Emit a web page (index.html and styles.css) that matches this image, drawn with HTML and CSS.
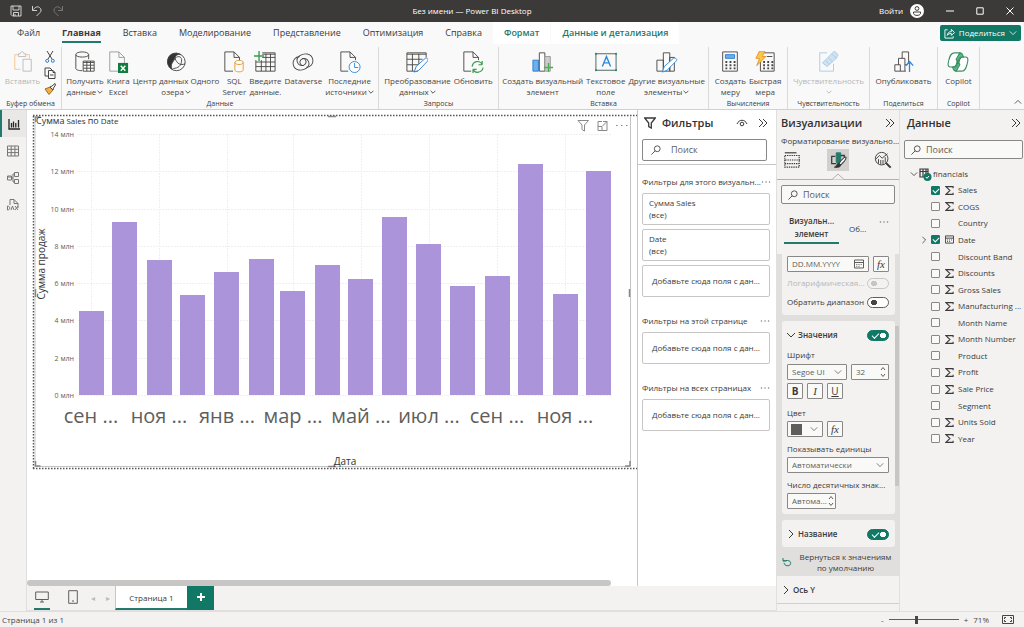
FILE: index.html
```html
<!DOCTYPE html>
<html lang="ru">
<head>
<meta charset="utf-8">
<title>Без имени — Power BI Desktop</title>
<link rel="stylesheet" href="styles.css">
</head>
<body>
<svg class="defs" aria-hidden="true">
  <symbol id="down" viewBox="0 0 10 10"><path d="M1 3l4 4 4-4"/></symbol>
  <symbol id="right" viewBox="0 0 10 10"><path d="M3 1l4 4-4 4"/></symbol>
  <symbol id="dbl" viewBox="0 0 10 10"><path d="M1 1l4 4-4 4M5 1l4 4-4 4"/></symbol>
  <symbol id="search" viewBox="0 0 12 12"><circle cx="7.500" cy="4.500" r="3.500"/><path d="M5 7l-4.500 4.500"/></symbol>
  <symbol id="dots" viewBox="0 0 12 4"><path d="M1 2h1.500M5.300 2h1.500M9.500 2H11"/></symbol>
  <symbol id="funnel" viewBox="0 0 12 12"><path d="M.7 1h10.600L7.300 6v5L4.700 9.500V6z"/></symbol>
  <symbol id="sigma" viewBox="0 0 8 8"><path d="M7.200 2V.6H.8L4.400 4 .8 7.400h6.400V6"/></symbol>
  <symbol id="spin" viewBox="0 0 6 12"><path d="M1 4l2-2.500L5 4M1 8l2 2.500L5 8"/></symbol>
  <symbol id="date" viewBox="0 0 10 9"><path d="M.5.5h9v8h-9zM.5 3h9M2.300 5h1M4.500 5h1M6.700 5h1M2.300 6.800h1M4.500 6.800h1"/></symbol>
</svg>

<header class="titlebar">
  <div class="quick">
    <button aria-label="Сохранить"><svg viewBox="0 0 12 12"><path d="M1 1h10v10H2.500L1 9.500zM3 1v4h6V1M3.500 11V7.500h5V11M5 9v2"/></svg></button>
    <button aria-label="Отменить"><svg viewBox="0 0 12 12"><path d="M1.500 1v4.500H6M1.500 5.500C4 2 6.500 1 8.500 2.500s2 3.500.5 5L5.500 11"/></svg></button>
    <button aria-label="Повторить" class="dim"><svg viewBox="0 0 12 12"><path d="M10.500 1v4.500H6M10.500 5.500C8 2 5.500 1 3.500 2.500s-2 3.500-.5 5L6.500 11"/></svg></button>
  </div>
  <h1>Без имени — Power BI Desktop</h1>
  <div class="window">
    <button class="login">Войти <svg viewBox="0 0 14 14"><circle cx="7" cy="7" r="7" fill="#fff" stroke="none"/><circle cx="7" cy="4.500" r="1.900" stroke="#3b3a39"/><path d="M3.500 8h7v1.500C10 12 4 12 3.500 9.500z" stroke="#3b3a39"/></svg></button>
    <button aria-label="Свернуть"><svg viewBox="0 0 8 8"><path d="M0 4h8"/></svg></button>
    <button aria-label="Развернуть"><svg viewBox="0 0 8 8"><path d="M.8.8h6.400v6.400H.8z"/></svg></button>
    <button aria-label="Закрыть"><svg viewBox="0 0 8 8"><path d="M.5.5l7 7M7.500.5l-7 7"/></svg></button>
  </div>
</header>

<nav class="tabs">
  <button>Файл</button><button class="on">Главная</button><button>Вставка</button><button>Моделирование</button><button>Представление</button><button>Оптимизация</button><button>Справка</button><button class="ctx">Формат</button><button class="ctx">Данные и детализация</button>
  <button class="share"><svg viewBox="0 0 12 12"><path d="M4 2H1v9h9V9M3.500 8C4 5 5.500 4 8 4V1.500L11.500 5 8 8V6C6 6 4.500 6.500 3.500 8z"/></svg>Поделиться<svg class="i8"><use href="#down"/></svg></button>
</nav>

<section class="ribbon">
  <div class="group">
    <div class="items paste">
      <button class="cmd off"><svg viewBox="0 0 24 24"><path stroke="#f5c491" d="M9 20H3V4h4M15 4h4v4"/><path stroke="#bbb" d="M7 6V3h2c0-3 4-3 4 0h2v3zM12 9h9v13h-9z"/></svg><span>Вставить</span></button>
      <div class="clip">
        <button aria-label="Вырезать"><svg viewBox="0 0 12 12"><path d="M3 0l5 8M9 0L4 8"/><g stroke="#2b7cd3"><circle cx="3.200" cy="9.800" r="1.500"/><circle cx="8.800" cy="9.800" r="1.500"/></g></svg></button>
        <button aria-label="Копировать"><svg viewBox="0 0 12 12"><path d="M4 9H1V1h5l2 2M4.500 3.500H9l2 2v6H4.500zM9 3.500v2h2M6 8h3.500"/></svg></button>
        <button aria-label="Формат по образцу"><svg viewBox="0 0 12 12"><path fill="#eeb04c" stroke="#a06a1a" d="M1 6l5-2 3 3-4 4.500z"/><path d="M6 4l2-1 3-2.500L11.500 2 9.500 5 9 7z"/></svg></button>
      </div>
    </div>
    <h2>Буфер обмена</h2>
  </div>
  <div class="group">
    <div class="items">
      <button class="cmd"><svg viewBox="0 0 24 24"><path d="M16 9V4c0-4-14-4-14 0v15c0 1.500 3 2.500 7 2.500M2 4c0 3.500 14 3.500 14 0"/><path fill="#fff" d="M10 11h12v11H10z"/><path d="M10 12.500h12M10 15.500h12M10 18.800h12M14 11v11M18 11v11"/></svg><span>Получить<br>данные<svg class="v"><use href="#down"/></svg></span></button>
      <button class="cmd"><svg viewBox="0 0 24 24"><path stroke="#999" d="M12 22H3V1h10l6 6v7M13 1v6h6"/><path fill="#107c41" stroke="none" d="M12 13h11v11H12z"/><path stroke="#fff" stroke-width="1.500" d="M15 16l5 5.500M20 16l-5 5.500"/></svg><span>Книга<br>Excel</span></button>
      <button class="cmd"><svg viewBox="0 0 24 24"><circle cx="12.500" cy="12" r="9.500"/><path fill="#333" d="M8 3C1 6 1 17 8 20c-3-5 1-8 3-12 0-3 3-5 6-4-3-2-6-2-9-1z"/><path d="M11 8c2 6 6 8 11 6M9 19c5 0 9-3 9-8 1-4-3-7-7-3"/></svg><span>Центр данных Одного<br>озера<svg class="v"><use href="#down"/></svg></span></button>
      <button class="cmd"><svg viewBox="0 0 24 24"><path d="M11 22H2V1h10l6 6v3M12 1v6h6"/><path fill="#fff" stroke="#e8912d" d="M13 12.500v8c0 3 9 3 9 0v-8c0-3-9-3-9 0c0 3 9 3 9 0"/></svg><span>SQL<br>Server</span></button>
      <button class="cmd"><svg viewBox="0 0 24 24"><path d="M9 2h14v20H2V10M9 3.500h14M2 12h21M9 7h14M2 17h21M8 10v12M13 3v19M18 3v19"/><path stroke="#3a9b4b" stroke-width="1.500" d="M5.500 0v11M0 5.500h11"/></svg><span>Введите<br>данные.</span></button>
      <button class="cmd"><svg viewBox="0 0 24 24"><g transform="rotate(-15 12 12)"><path d="M12 15.500c-4 1-5-6 0-7 7-1 8 9 2 11C8 21.500 1 19 1 12.500 1 7 6 4 10 5.500"/><path d="M12 8.500c4-1 5 6 0 7-7 1-8-9-2-11C16 2.500 23 5 23 11.500c0 5.500-5 8.500-9 7"/></g></svg><span>Dataverse</span></button>
      <button class="cmd"><svg viewBox="0 0 24 24"><path d="M10 22H2V1h10l6 6v3M12 1v6h6"/><g stroke="#2b88d8" fill="#fff"><circle cx="17" cy="17.500" r="6"/><path d="M17 13v5h4"/></g></svg><span>Последние<br>источники<svg class="v"><use href="#down"/></svg></span></button>
    </div>
    <h2>Данные</h2>
  </div>
  <div class="group">
    <div class="items">
      <button class="cmd"><svg viewBox="0 0 24 24"><path d="M13 22H1V2h21v5M1 3.500h21M1 9h17M1 15h13M7 3v19M14 3v12"/><path fill="#fff" stroke="#2b7cd3" d="M9 23l2-6L21 8c2-1 4 1 2.500 3L14 21z"/></svg><span>Преобразование<br>данных<svg class="v"><use href="#down"/></svg></span></button>
      <button class="cmd"><svg viewBox="0 0 24 24"><path d="M10 22H2V1h10l6 6v3M12 1v6h6"/><path stroke="#3a9b4b" stroke-width="1.300" d="M11 17c1-7 9-7 11-2v-4M22 15h-4M23 18c-1 6-9 7-11 2v4M12 20h4"/></svg><span>Обновить</span></button>
    </div>
    <h2>Запросы</h2>
  </div>
  <div class="group">
    <div class="items">
      <button class="cmd"><svg viewBox="0 0 24 24"><path fill="#6bb1ee" stroke="#2b7cd3" d="M1 10h6v12H1z"/><path fill="#fff" d="M8 2h6v20H8z"/><path fill="#ccc" stroke="#999" d="M14 6h6v16h-6z"/><path stroke="#4caf50" stroke-width="1.500" d="M18 13v10M13 18h10"/></svg><span>Создать визуальный<br>элемент</span></button>
      <button class="cmd"><svg viewBox="0 0 24 24"><path stroke="#40605c" d="M1 3h22v18H1z"/><path stroke="#2b88d8" stroke-width="1.500" d="M8 17l4.500-11L17 17M9.500 13h6"/><path fill="#217a6b" stroke="#217a6b" d="M.5 2.500h1v1h-1zM22.500 2.500h1v1h-1zM.5 20.500h1v1h-1zM22.500 20.500h1v1h-1z"/></svg><span>Текстовое<br>поле</span></button>
      <button class="cmd"><svg viewBox="0 0 24 24"><path d="M1 10h7v12H1zM8 2h7v20H8zM15 7h5v15h-5z"/><path fill="#fff" stroke="#2b88d8" d="M7 23l2-6L19 8c2-1 5 1 3 3L12 21z"/></svg><span>Другие визуальные<br>элементы<svg class="v"><use href="#down"/></svg></span></button>
    </div>
    <h2>Вставка</h2>
  </div>
  <div class="group">
    <div class="items">
      <button class="cmd"><svg viewBox="0 0 24 24"><path d="M4 1h16v21H4z"/><path fill="#6bb1ee" stroke="#2b7cd3" d="M7 4h10v4H7z"/><path stroke-width="2" stroke-dasharray="2 2.500" d="M7 12h11M7 15.500h11M7 19h11"/></svg><span>Создать<br>меру</span></button>
      <button class="cmd"><svg viewBox="0 0 24 24"><path d="M11 2h11v20H7V11M14 6h6"/><path stroke-width="2" stroke-dasharray="2 2.500" d="M10 12h11M10 15.500h11M10 19h11"/><path fill="#f7c948" stroke="#e8912d" d="M6 0h6L9 6h4L3 16l3-8H2z"/></svg><span>Быстрая<br>мера</span></button>
    </div>
    <h2>Вычисления</h2>
  </div>
  <div class="group">
    <div class="items">
      <button class="cmd off"><svg viewBox="0 0 24 24"><path stroke="#a8cbe8" d="M11 2H3v20h15V14"/><path fill="#cfe2f2" stroke="#a8cbe8" d="M6 13L16 3l5 5-10 9zM16 3l3-3 4 4-2 4M9 10l5 5M12 7l5 5"/></svg><span>Чувствительность<br><svg class="v"><use href="#down"/></svg></span></button>
    </div>
    <h2>Чувствительность</h2>
  </div>
  <div class="group">
    <div class="items">
      <button class="cmd"><svg viewBox="0 0 24 24"><path d="M14 22H2v-7h6v7M6 15V8h7v14M10 8V1h7v13M13 15h3"/><path stroke="#2b88d8" stroke-width="1.400" d="M18 23V12M14 16l4-4.500 4 4.500"/></svg><span>Опубликовать</span></button>
    </div>
    <h2>Поделиться</h2>
  </div>
  <div class="group">
    <div class="items">
      <button class="cmd"><svg viewBox="0 0 24 24"><g stroke="#3d8f63" stroke-width="1.200"><path fill="#fff" d="M6 17.500H3.500c-3 0-2.500-4-1.500-7.500C3 6 4 2 8 2h6l-4 13c-.5 1.500-1.500 2.500-4 2.500z"/><path fill="#fff" d="M18 6.500h2.500c3 0 2.500 4 1.500 7.500-1 4-2 8-6 8h-6l4-13c.5-1.500 1.500-2.500 4-2.500z"/><path fill="#5cb88a" d="M14 2c3 0 3 2.500 4 4.500h-2c-2 0-2.500 1-3 3L12 13 10 9zM10 22c-3 0-3-2.500-4-4.500h2c2 0 2.500-1 3-3l1-3.500 2 4z"/></g></svg><span>Copilot</span></button>
    </div>
    <h2>Copilot</h2>
  </div>
  <div class="group last"><button aria-label="Свернуть ленту"><svg class="i8 up"><use href="#down"/></svg></button></div>
</section>

<main>
  <nav class="rail">
    <button class="on" aria-label="Отчет"><svg viewBox="0 0 12 12"><path stroke-width="1.300" d="M1 1v10h11M3.500 9.500V5M5.500 9.500V3.500M7.800 9.500V5M10.500 9.500V2"/></svg></button>
    <button aria-label="Таблица"><svg viewBox="0 0 12 12"><path d="M.5 1h11v10H.5zM.5 4.300h11M.5 7.600h11M4.200 1v10M7.900 1v10"/></svg></button>
    <button aria-label="Модель"><svg viewBox="0 0 12 12"><path d="M.5 4h4v4h-4zM.5 5h4M7.500.5h4v4h-4zM7.500 7.500h4v4h-4zM7.500 2H6v8h1.500M4.500 6H6"/></svg></button>
    <button aria-label="DAX"><svg viewBox="0 0 12 12"><path d="M3 6V.5h4l4 4V9M7 .5v4h4M.5 7v4c3 0 3-4 0-4M4 11l1.500-4L7 11M8 7l3 4M11 7l-3 4"/></svg></button>
  </nav>

  <section class="center">
    <div class="work">
      <div class="canvas">
        <svg class="chart" viewBox="27 110 610 364" role="img" aria-label="Сумма Sales по Date">
          <g class="grid" id="grid"></g>
          <g class="bars" id="bars"></g>
          <path class="dotted" d="M33 115.500h604M33.500 116v353M33 468.500h604"/>
          <path class="frame" d="M35 117v350M35 466.500h595M630.500 117v349"/>
          <path class="grips" d="M328 116.500h8M328 466.500h8M629.500 289v8M35.500 289v8M35.500 461v5h5M630 461v5h-5M35.500 122v-5h5"/>
          <text class="title" x="36" y="124"><tspan class="big">Сумма</tspan> Sales <tspan class="big">по</tspan> Date</text>
          <text class="axis" x="345" y="465" text-anchor="middle">Дата</text>
          <text class="axis" transform="translate(45 264) rotate(-90)" text-anchor="middle">Сумма продаж</text>
          <g class="tools"><path d="M578 120.500h10.500L584.500 125v6l-2.500-1.500V125z"/><path d="M602 121.500h-4v9h9v-5M598 126.500h4v4M603 121.500h4v4M607 121.500l-4.500 4.500"/><path d="M616 125.500h1.500M621 125.500h1.500M626 125.500h1.500"/></g>
        </svg>
      </div>

      <aside class="filters">
        <div class="pane-head"><svg class="funnel"><use href="#funnel"/></svg><h2>Фильтры</h2><svg class="eye" viewBox="0 0 12 8"><path d="M1 5c2-5 8-5 10 0"/><circle cx="6" cy="5" r="1.800"/></svg><button aria-label="Свернуть фильтры"><svg class="i10"><use href="#dbl"/></svg></button></div>
        <label class="search"><svg><use href="#search"/></svg><input type="text" placeholder="Поиск" aria-label="Поиск фильтров"></label>
        <div class="filter-body">
          <h3><span>Фильтры для этого визуальн...</span><svg class="more"><use href="#dots"/></svg></h3>
          <div class="fcard">Сумма Sales<br>(все)</div>
          <div class="fcard">Date<br>(все)</div>
          <div class="fcard drop">Добавьте сюда поля с дан...</div>
          <h3><span>Фильтры на этой странице</span><svg class="more"><use href="#dots"/></svg></h3>
          <div class="fcard drop">Добавьте сюда поля с дан...</div>
          <h3><span>Фильтры на всех страницах</span><svg class="more"><use href="#dots"/></svg></h3>
          <div class="fcard drop">Добавьте сюда поля с дан...</div>
        </div>
      </aside>
      <div class="hscroll"></div>
    </div>

    <div class="pages">
      <button class="view on" aria-label="Компьютер"><svg viewBox="0 0 14 12"><path d="M.7 1h12.600v7.500H.7zM5 11h4M7 8.500V11"/></svg></button>
      <button class="view" aria-label="Телефон"><svg viewBox="0 0 14 14"><path d="M2.700.7h8.600v12.600H2.700zM6 11h2"/></svg></button>
      <button class="nav" aria-label="Назад">◂</button><button class="nav" aria-label="Вперед">▸</button>
      <button class="page">Страница 1</button>
      <button class="add" aria-label="Новая страница"><svg viewBox="0 0 8 8"><path d="M4 0v8M0 4h8"/></svg></button>
    </div>
  </section>

  <aside class="viz">
    <div class="pane-head"><h2>Визуализации</h2><button aria-label="Свернуть визуализации"><svg class="i10"><use href="#dbl"/></svg></button></div>
    <p class="sub">Форматирование визуально...</p>
    <div class="modes">
      <button aria-label="Построить"><svg viewBox="0 0 20 20"><path d="M2 2h13" stroke-width="1.300"/><g stroke-dasharray="1.500 1" stroke-width="1.300"><path d="M2 5h16v5H2zM2 10v8h16v-8M2 14h16"/></g></svg></button>
      <button class="on" aria-label="Формат"><svg viewBox="0 0 20 20"><path fill="#217a6b" stroke="#217a6b" d="M8 2h5v9l-3 4-2-3z"/><path stroke-width="1.400" d="M7 6H3v8h5M13 5h4v2"/><path fill="#fff" stroke-width="1.200" d="M19 7c-1-1-4 1-8 7l2 1.500C17 12 19 9 19 7z"/><path fill="#333" d="M11 14l2 1.500c0 3-5 3-7 2.500 3-1 2-4 5-4z"/></svg></button>
      <button aria-label="Аналитика"><svg viewBox="0 0 20 20"><circle cx="8.500" cy="8.500" r="7"/><path d="M2 9l4-4 3 3 6-5M5 14V9M7.500 15V10M10 15V10M12.500 13V7"/><path stroke-width="2.200" d="M13.500 13.500l5 5"/></svg></button>
    </div>
    <div class="notch"><svg viewBox="0 0 12 7"><path fill="#f3f2f1" d="M0 6.500L6 1l6 5.500"/></svg></div>
    <label class="search"><svg><use href="#search"/></svg><input type="text" placeholder="Поиск" aria-label="Поиск параметров"></label>
    <div class="subtabs"><button class="on">Визуальн...<br>элемент</button><button>Об...</button><svg class="more"><use href="#dots"/></svg></div>
    <div class="scroll">
      <section class="card first">
        <div class="row"><label class="field wide"><input type="text" placeholder="DD.MM.YYYY" aria-label="Дата"><svg class="i10"><use href="#date"/></svg></label><button class="sq fx">fx</button></div>
        <label class="row tight off"><span>Логарифмическая...</span><input type="checkbox" class="toggle" disabled></label>
        <label class="row tight"><span>Обратить диапазон</span><input type="checkbox" class="toggle"></label>
      </section>
      <section class="card values">
        <label class="row head"><svg class="i10"><use href="#down"/></svg><b>Значения</b><input type="checkbox" class="toggle" checked></label>
        <label class="cap font-cap" for="font">Шрифт</label>
        <div class="row"><div class="field font"><select id="font"><option>Segoe UI</option></select><svg class="i8"><use href="#down"/></svg></div><div class="field size"><input type="text" value="32" aria-label="Размер"><svg class="spin"><use href="#spin"/></svg></div></div>
        <div class="row styles"><button class="sq"><b>B</b></button><button class="sq"><i>I</i></button><button class="sq"><u>U</u></button></div>
        <p class="cap color-cap">Цвет</p>
        <div class="row"><button class="field color" aria-label="Цвет"><span></span><svg class="i8"><use href="#down"/></svg></button><button class="sq fx">fx</button></div>
        <label class="cap unit" for="units">Показывать единицы</label>
        <div class="row"><div class="field wide"><select id="units"><option>Автоматически</option></select><svg class="i8"><use href="#down"/></svg></div></div>
        <label class="cap unit" for="dec">Число десятичных знак...</label>
        <div class="row"><div class="field dec"><input id="dec" type="text" value="Автома..."><svg class="spin"><use href="#spin"/></svg></div></div>
      </section>
      <section class="card name"><label class="row head"><svg class="i10"><use href="#right"/></svg><b>Название</b><input type="checkbox" class="toggle" checked></label></section>
      <button class="reset"><svg viewBox="0 0 10 10"><path d="M1 1v3h3.500M1 4c8-2 8 2 7.500 3-1 3-6 2-6.500-1"/></svg><span>Вернуться к значениям<br>по умолчанию</span></button>
      <button class="axis-row"><svg class="i10"><use href="#right"/></svg>Ось Y</button>
      <div class="thumb"></div>
    </div>
  </aside>

  <aside class="data">
    <div class="pane-head"><h2>Данные</h2><button aria-label="Свернуть данные"><svg class="i10"><use href="#dbl"/></svg></button></div>
    <label class="search"><svg><use href="#search"/></svg><input type="text" placeholder="Поиск" aria-label="Поиск полей"></label>
    <div class="table-name"><svg class="i8"><use href="#down"/></svg><svg class="tbl" viewBox="0 0 13 13"><path stroke-width="1.200" d="M1 1h8v8H1zM1 3.500h8M4 1v8M7 1v8"/><circle cx="8.500" cy="9" r="4" fill="#117865" stroke="none"/><path stroke="#fff" d="M6.800 9l1.200 1.300 2-2.300"/></svg>financials</div>
    <div class="fields" id="fields"></div>
  </aside>
</main>

<footer class="status">
  <span>Страница 1 из 1</span>
  <div class="zoom"><button>-</button><input type="range" min="10" max="200" value="84" aria-label="Масштаб"><button>+</button><span>71%</span><svg viewBox="0 0 12 9"><path d="M.5 3V.5h11V3M.5 6v2.500h11V6M.5 3v3M11.500 3v3M2.500 4V2.500H4M8 2.500h1.500V4M2.500 5v1.500H4M8 6.500h1.500V5"/></svg></div>
</footer>
<script src="script.js"></script>
</body>
</html>
```
FILE: script.js
```js
const BASE = 395;
const bars = [[79, 311], [112, 222], [147, 260], [180, 295], [214, 272], [249, 259], [280, 291], [315, 265],
  [348, 279], [382, 217], [416, 244], [450, 286], [485, 276], [518, 164], [553, 294], [586, 171]];
document.getElementById('bars').innerHTML =
  bars.map(([x, y]) => `<rect x="${x}" y="${y}" width="25" height="${BASE - y}"/>`).join('');

const months = [['сен', 91], ['ноя', 159], ['янв', 227], ['мар', 293], ['май', 361], ['июл', 429], ['сен', 497], ['ноя', 565]];
let grid = '';
for (let i = 0; i <= 7; i++) {
  const y = Math.round(BASE - i * 37.3);
  grid += `<path d="M78 ${y}.5H612"/><text class="tick" x="74" y="${y + 3}" text-anchor="end">${i * 2} млн</text>`;
}
for (const [m, x] of months) {
  grid += `<path d="M${x}.5 134V395"/><text class="month" x="${x}" y="423" text-anchor="middle">${m} ...</text>`;
}
document.getElementById('grid').innerHTML = grid;

const fields = [['Sales', 's', 1], ['COGS', 's'], ['Country'], ['Date', 'd', 1], ['Discount Band'], ['Discounts', 's'],
  ['Gross Sales', 's'], ['Manufacturing ...', 's'], ['Month Name'], ['Month Number', 's'], ['Product'], ['Profit', 's'],
  ['Sale Price', 's'], ['Segment'], ['Units Sold', 's'], ['Year', 's']];
document.getElementById('fields').innerHTML = fields.map(([name, kind, on]) => `<label>
  <svg class="i8">${kind === 'd' ? '<use href="#right"/>' : ''}</svg>
  <input type="checkbox" ${on ? 'checked' : ''}>
  <svg class="kind">${kind ? `<use href="#${kind === 'd' ? 'date' : 'sigma'}"/>` : ''}</svg>
  <span>${name}</span></label>`).join('');
```
FILE: styles.css
```css
* { box-sizing: border-box; }
body { margin: 0; height: 100vh; display: flex; flex-direction: column; overflow: hidden; background: #f3f2f1; color: #3b3a39; font: 8px/12px "Open Sans", "Noto Sans", sans-serif; }
button, input, select { font: inherit; color: inherit; background: none; border: 0; padding: 0; margin: 0; }
h1, h2, h3, p { margin: 0; font-weight: 400; }
svg { fill: none; stroke: currentColor; flex: none; }
.defs { position: absolute; width: 0; height: 0; }
.i8 { width: 8px; height: 8px; }
.i10 { width: 10px; height: 10px; }

.titlebar { flex: none; height: 22px; background: #3b3a39; color: #fff; display: grid; grid-template-columns: 1fr auto 1fr; align-items: center; }
.titlebar h1 { font-size: 8px; margin-right: 80px; }
.titlebar button { display: flex; align-items: center; }
.quick { display: flex; gap: 9px; padding-left: 10px; color: #d2d0ce; }
.quick svg { width: 12px; height: 12px; }
.dim { opacity: .4; }
.window { display: flex; justify-content: flex-end; gap: 22px; padding-right: 10px; }
.window svg { width: 8px; height: 8px; }
.window .login { gap: 7px; }
.window .login svg { width: 14px; height: 14px; }

.tabs { flex: none; height: 22px; background: #f9f9f9; display: flex; padding-left: 6px; font-size: 9px; }
.tabs button { padding: 0 11px; position: relative; }
.tabs .on { font-weight: 700; }
.tabs .on::after { content: ""; position: absolute; left: 11px; right: 11px; bottom: 1px; height: 2px; background: #217a6b; }
.tabs .ctx { background: #fff; color: #217a6b; font-weight: 600; margin-right: 1px; }
.tabs .share { margin: 3px 3px 3px auto; padding: 0 4px; font-size: 8px; background: #117865; color: #fff; border-radius: 2px; display: flex; align-items: center; gap: 4px; font-weight: 500; }
.share svg:first-child { width: 11px; height: 11px; }

.ribbon { flex: none; background: #f9f9f9; border-bottom: 1px solid #d2d0ce; display: grid; grid-template-columns: 62fr 317fr 120fr 210fr 79fr 82fr 68fr 42fr 44fr; height: 66px; }
.group { min-width: 0; display: flex; flex-direction: column; justify-content: space-between; margin-top: 3px; padding-top: 4px; border-right: 1px solid #dcdad8; }
.group h2 { font-size: 7px; line-height: 10px; text-align: center; white-space: nowrap; }
.items { display: flex; justify-content: center; gap: 3px; white-space: nowrap; color: #484644; }
.cmd { display: flex; flex-direction: column; align-items: center; line-height: 11px; gap: 2px; }
.cmd > svg { width: 22px; height: 22px; }
.cmd .v { width: 6px; height: 6px; margin-left: 1px; stroke-width: 1.500; }
.off { color: #b8b6b4; }
.paste { gap: 4px; }
.clip { display: flex; flex-direction: column; gap: 4px; }
.clip button, .clip svg { display: block; width: 12px; height: 12px; }
.last { border: 0; justify-content: flex-end; align-items: flex-end; padding: 0 2px 3px; }
.last button { display: flex; }
.up { transform: rotate(180deg); }

main { flex: 1; min-height: 0; display: flex; }
.rail { width: 27px; flex: none; border-right: 1px solid #e1dfdd; display: flex; flex-direction: column; }
.rail button { height: 27px; display: grid; place-items: center; color: #797775; }
.rail .on { border-left: 2px solid #217a6b; background: #eae8e6; color: #252423; }
.rail svg { width: 12px; height: 12px; }
.center { flex: 1; min-width: 0; display: flex; flex-direction: column; }
.work { flex: 1; min-height: 0; display: flex; position: relative; background: #fff; }
.canvas { flex: 1; min-width: 0; }
.hscroll { position: absolute; left: 0; width: 78%; bottom: 0; height: 6px; border-radius: 3px; background: #c8c6c4; }
.chart { display: block; width: 100%; }
.grid path { stroke: #f0f0f0; stroke-dasharray: 2 1; }
.bars { fill: #ac94db; stroke: none; }
.dotted { stroke: #555; stroke-width: 1.500; stroke-dasharray: 1.500 1.500; }
.frame { stroke: #c4c4c4; }
.grips { stroke: #888; stroke-width: 1.500; }
.chart text { stroke: none; fill: #605e5c; }
.chart .title { font-size: 8px; fill: #323130; }
.chart .title .big { font-size: 9px; }
.chart .axis { font-size: 10px; fill: #323130; }
.chart .tick { font-size: 7px; }
.chart .month { font-size: 20px; }
.tools { stroke: #888; }

.pane-head { display: flex; align-items: center; height: 25px; padding: 0 6px; }
.pane-head h2 { flex: 1; font-size: 11px; font-weight: 600; color: #323130; }
.pane-head button { display: flex; }
.search { display: flex; align-items: center; height: 19px; border: 1px solid #8a8886; border-radius: 2px; padding: 0 6px; gap: 5px; font-size: 9px; background: #f9f9f8; }
.search svg { width: 10px; height: 10px; }
.search input { min-width: 0; flex: 1; outline: 0; }
::placeholder { color: #605e5c; opacity: 1; }

.filters { width: 139px; flex: none; border-left: 1px solid #c8c6c4; }
.funnel { width: 12px; height: 12px; margin-right: 6px; stroke-width: 1.300; }
.eye { width: 12px; height: 8px; margin-right: 10px; }
.filters .pane-head { padding-right: 8px; }
.filters .search { height: 22px; margin: 4px 9px 3px 4px; background: #fff; gap: 10px; padding-left: 8px; }
.filter-body { border-top: 1px solid #c8c6c4; padding: 10px 6px 0 4px; }
.filters h3 { display: flex; align-items: center; justify-content: space-between; font-size: 8px; line-height: 14px; margin-bottom: 4px; white-space: nowrap; }
.filters .fcard + h3 { margin-top: 17px; }
.more { width: 10px; height: 4px; }
.fcard { height: 32px; border: 1px solid #c8c6c4; border-radius: 2px; padding: 3px 6px; margin-bottom: 4px; white-space: nowrap; }
.fcard.drop { padding: 9px 8px; text-align: center; }

.pages { flex: none; height: 25px; display: flex; background: #f3f2f1; border-bottom: 1px solid #e1dfdd; }
.view { width: 16px; margin-left: 7px; display: flex; justify-content: center; align-items: center; border-bottom: 2px solid transparent; color: #605e5c; }
.view.on { border-color: #217a6b; }
.view svg { width: 14px; height: 14px; }
.view + .view { margin: 0 4px 0 15px; }
.nav { width: 15px; color: #bbb; }
.page { width: 72px; background: #fff; border-bottom: 2px solid #217a6b; border-left: 1px solid #c8c6c4; font-weight: 500; padding-top: 2px; }
.add { width: 27px; background: #117865; color: #fff; }
.add svg { width: 8px; height: 8px; stroke-width: 2; }

.viz { width: 124px; flex: none; border-left: 1px solid #e1dfdd; border-right: 1px solid #e1dfdd; display: flex; flex-direction: column; }
.viz > * { flex: none; }
.viz .pane-head { padding: 0 4px; }
.sub { padding-left: 4px; font-weight: 500; white-space: nowrap; }
.modes { display: flex; justify-content: space-between; padding: 2px 5px 0 4px; }
.modes button { width: 22px; height: 22px; display: grid; place-items: center; }
.modes .on { background: #d2d0ce; }
.modes svg { width: 18px; height: 18px; }
.notch { height: 9px; border-bottom: 1px solid #b3b0ad; display: flex; justify-content: center; align-items: flex-end; margin-bottom: 5px; }
.notch svg { width: 12px; height: 7px; margin-bottom: -1px; stroke: #b3b0ad; }
.viz .search { margin: 0 4px; }
.subtabs { display: flex; align-items: center; gap: 10px; padding: 0 10px 0 7px; height: 50px; font-size: 8px; }
.subtabs .on { font-weight: 600; line-height: 13px; border-bottom: 2px solid #217a6b; width: 55px; padding-bottom: 2px; }
.subtabs .more { margin: 0 0 14px auto; }
.viz > .scroll { flex: 1; min-height: 0; overflow: hidden; position: relative; background: #e1dfdd; display: flex; flex-direction: column; }
.card { flex: none; margin: 0 4px 6px 5px; padding: 6px 6px 5px 5px; background: #f3f2f1; border-radius: 3px; display: flex; flex-direction: column; }
.card.first { padding: 2px 6px 5px 5px; border-radius: 0 0 3px 3px; gap: 3px; }
.row { display: flex; align-items: center; gap: 4px; min-height: 16px; white-space: nowrap; }
.row.tight { gap: 1px; }
.row span:first-child { flex: 1; min-width: 0; }
.row.head b { flex: 1; font-weight: 600; }
.row.head { gap: 2px; }
.row.head svg { margin-left: -1px; }
.field { height: 16px; display: flex; align-items: center; border: 1px solid #8a8886; border-radius: 1px; padding: 0 4px; background: #f9f9f8; color: #605e5c; }
.field input, .field select { min-width: 0; width: 100%; flex: 1; appearance: none; outline: 0; }
.wide { flex: 1; min-width: 0; }
.font { flex: 5; min-width: 0; }
.size { flex: 3; min-width: 0; padding: 0 2px 0 4px; }
.spin { width: 6px; height: 12px; }
.sq { width: 16px; height: 16px; border: 1px solid #8a8886; border-radius: 1px; font-size: 10px; line-height: 12px; background: #f9f9f8; }
.sq i { font-family: "Liberation Serif", serif; font-size: 11px; }
.fx { font: italic 11px/12px "Liberation Serif", serif; }
.styles { margin-top: 3px; }
.cap { line-height: 12px; margin-bottom: 3px; white-space: nowrap; }
.font-cap { margin-top: 6px; }
.color-cap { margin-top: 8px; margin-bottom: 2px; }
.unit { margin-top: 6px; margin-bottom: 2px; }
.color { width: 36px; justify-content: space-between; padding: 0 4px 0 3px; }
.color span { width: 11px; height: 11px; background: #605e5c; }
.row .color span:first-child { flex: none; }
.dec { width: 49px; padding: 0 1px 0 4px; }
.toggle { appearance: none; width: 22px; height: 11px; border: 1px solid #605e5c; border-radius: 6px; flex: none; background: radial-gradient(circle at 6px 50%, #484644 0 3px, transparent 3px) #fff; }
.toggle:disabled { border-color: #c8c6c4; background: radial-gradient(circle at 6px 50%, #c8c6c4 0 3px, transparent 3px); }
.toggle:checked { position: relative; border-color: #117865; background: radial-gradient(circle at 15px 50%, #fff 0 3px, transparent 3px) #117865; }
.toggle:checked::after { content: ""; position: absolute; left: 4px; top: 2px; width: 6px; height: 3px; border: solid #fff; border-width: 0 0 1px 1px; transform: rotate(-45deg); }
.reset { flex: none; display: flex; align-items: center; line-height: 11px; padding: 0 6px 2px 5px; gap: 6px; margin-top: -2px; }
.reset svg { width: 10px; height: 10px; color: #217a6b; }
.reset span { flex: 1; white-space: nowrap; }
.axis-row { flex: none; height: 28px; background: #f3f2f1; border-bottom: 1px solid #d2d0ce; display: flex; align-items: center; gap: 2px; padding-left: 4px; font-weight: 600; margin-top: 1px; }
.scroll::after { content: ""; flex: 1; background: #f3f2f1; }
.thumb { position: absolute; right: 0; top: 72px; width: 4px; height: 160px; background: #c8c6c4; }

.data { width: 124px; flex: none; }
.data .pane-head { padding: 0 3px 0 7px; }
.data .search { margin: 5px 1px 0 4px; }
.table-name { display: flex; align-items: center; height: 16px; margin: 7px 0 0 10px; gap: 1px; }
.tbl { width: 13px; height: 13px; }
.fields { height: 265px; display: grid; grid-auto-rows: 1fr; padding-left: 20px; }
.fields label { display: flex; align-items: center; white-space: nowrap; gap: 4px; }
.fields input { appearance: none; width: 9px; height: 9px; border: 1px solid #8a8886; border-radius: 1px; margin: 0 1px 0 -1px; background: #f9f9f8; display: grid; place-items: center; flex: none; }
.fields input:checked { background: #117865; border-color: #117865; }
.fields input:checked::after { content: ""; width: 5px; height: 3px; border: solid #fff; border-width: 0 0 1px 1px; transform: rotate(-45deg); margin-bottom: 1px; }
.kind { width: 9px; height: 9px; }

.status { flex: none; height: 16px; border-top: 1px solid #e1dfdd; display: flex; align-items: center; justify-content: space-between; padding: 0 10px 0 2px; color: #484644; }
.zoom { display: flex; align-items: center; gap: 5px; }
.zoom input { appearance: none; width: 70px; height: 1px; background: #605e5c; }
.zoom input::-webkit-slider-thumb { appearance: none; width: 3px; height: 8px; background: #484644; }
.zoom svg { width: 12px; height: 9px; margin-left: 8px; }
```
